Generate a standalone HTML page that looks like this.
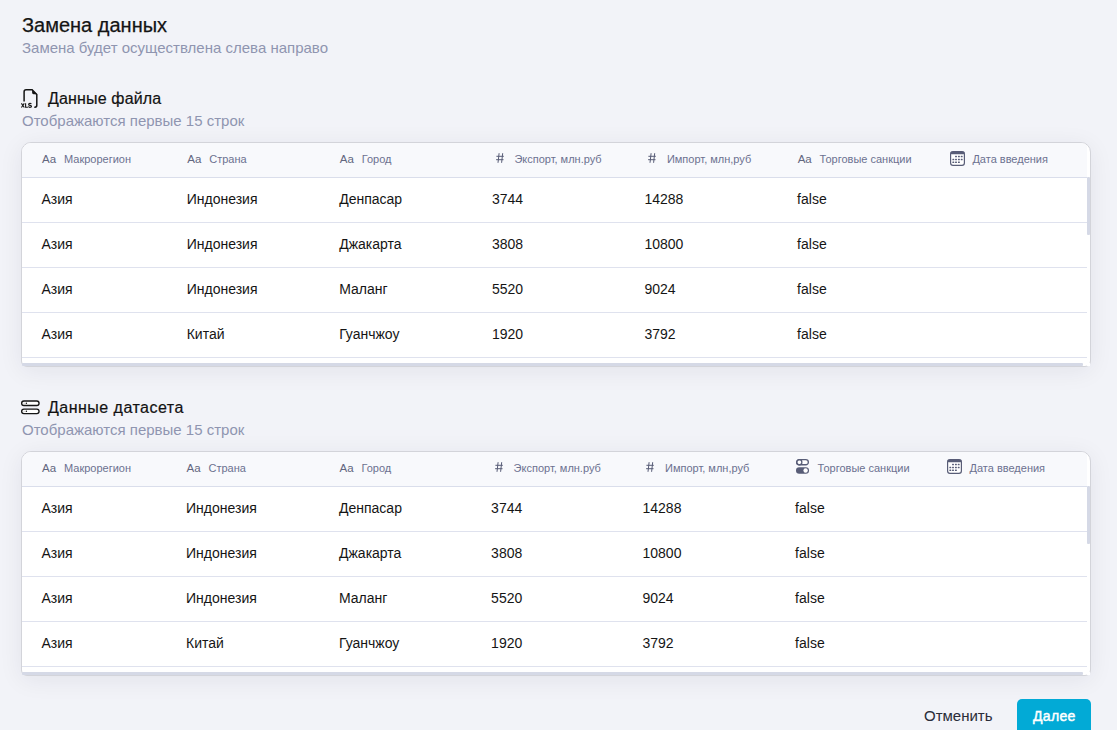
<!DOCTYPE html>
<html><head><meta charset="utf-8">
<style>
*{box-sizing:border-box;margin:0;padding:0}
html,body{width:1117px;height:730px;overflow:hidden;background:#f2f3f8;font-family:"Liberation Sans",sans-serif}
.abs{position:absolute;white-space:nowrap}
.t1{left:22px;top:13px;font-size:20px;line-height:24px;color:#141414;-webkit-text-stroke:0.25px #141414}
.sub{left:22px;font-size:15px;line-height:18px;color:#8f95b0}
.st{left:48px;font-size:16px;line-height:20px;color:#121212;-webkit-text-stroke:0.2px #121212}
.tbl{position:absolute;left:21px;width:1070px;height:225px;border:1px solid #d3d4da;border-radius:10px 10px 6px 6px;background:#fff;box-shadow:0 4px 24px rgba(30,35,60,0.07);overflow:hidden}
.hdr{position:absolute;left:0;top:0;width:1065px;height:35px;background:#f8f9fc;border-bottom:1px solid #dadeeb}
.row{position:absolute;left:0;width:1065px;height:45px;border-bottom:1px solid #dfe2ee}
.c{position:absolute;white-space:nowrap}
.hl{font-size:11px;line-height:14px;color:#6c7190;top:8.5px}
.ic{font-size:11.5px;line-height:14px;color:#62667e;top:9px}
.ich{font-size:13px;line-height:14px;color:#585d77;top:9px;font-weight:700}
.d{font-size:14px;line-height:16px;color:#151515;top:12.5px}
.vsb{position:absolute;left:1065px;top:34px;width:3px;height:58px;background:#d5d9e6;border-radius:1px}
.hsb{left:22px;width:1061px;height:3px;background:#d5d9e6;border-radius:1px}
.corner{left:1087px;width:3px;height:3px;background:#fff}
.btn2{left:924px;top:707px;font-size:15px;line-height:18px;color:#2a2c38;-webkit-text-stroke:0.05px #2a2c38}
.btn{left:1017px;top:699px;width:74px;height:40px;border-radius:5px;background:#02aad6}
.btnt{left:1033px;top:707px;font-size:14px;line-height:18px;color:#fff;font-weight:400;-webkit-text-stroke:0.45px #fff;letter-spacing:0.35px}

</style></head><body>
<div class="abs t1">Замена данных</div>
<div class="abs sub" style="top:39px">Замена будет осуществлена слева направо</div>
<svg class="abs" style="left:18px;top:86px" width="24" height="24" viewBox="0 0 24 24">
<path d="M6.1 15.5 V5.8 Q6.1 3.8 8.1 3.8 H14.1 L18.8 8.5 V19.3 Q18.8 21.2 17 21.2 H16.3" fill="none" stroke="#151515" stroke-width="1.5" stroke-linecap="butt"/>
<path d="M14.1 3.4 V6.8 Q14.1 8.2 15.5 8.2 H19.2 Z" fill="#151515"/>
<g fill="none" stroke="#151515" stroke-width="1.1">
<path d="M3.4 17.4 L6.3 21.5 M6.3 17.4 L3.4 21.5"/>
<path d="M7.6 17.2 V21.2 H9.9"/>
<path d="M13.3 18.1 Q13 17.4 11.9 17.4 Q10.6 17.4 10.6 18.4 Q10.6 19.2 11.9 19.4 Q13.5 19.6 13.5 20.5 Q13.5 21.4 11.9 21.4 Q10.7 21.4 10.3 20.6"/>
</g>
</svg>
<div class="abs st" style="top:89px;letter-spacing:0.16px">Данные файла</div>
<div class="abs sub" style="top:112px">Отображаются первые 15 строк</div>
<div class="tbl" style="top:142px">
<div class="hdr"><div class="c ic" style="left:20.1px">Aa</div><div class="c hl" style="left:42.0px">Макрорегион</div><div class="c ic" style="left:165.3px">Aa</div><div class="c hl" style="left:187.2px">Страна</div><div class="c ic" style="left:317.8px">Aa</div><div class="c hl" style="left:339.7px">Город</div><svg class="c" style="left:473.8px;top:10.3px" width="8" height="10" viewBox="0 0 8 10"><path d="M3.1 0.2 L2.0 9.8 M6.7 0.2 L5.6 9.8 M0.4 3.3 H7.8 M0.1 6.7 H7.5" stroke="#585d77" stroke-width="1.0" fill="none"/></svg><div class="c hl" style="left:492.4px">Экспорт, млн.руб</div><svg class="c" style="left:626.3px;top:10.3px" width="8" height="10" viewBox="0 0 8 10"><path d="M3.1 0.2 L2.0 9.8 M6.7 0.2 L5.6 9.8 M0.4 3.3 H7.8 M0.1 6.7 H7.5" stroke="#585d77" stroke-width="1.0" fill="none"/></svg><div class="c hl" style="left:644.9px">Импорт, млн,руб</div><div class="c ic" style="left:775.7px">Aa</div><div class="c hl" style="left:797.6px">Торговые санкции</div><svg class="c" style="left:927.9px;top:8px" width="15" height="15" viewBox="0 0 15 15"><rect x="0.6" y="0.6" width="13.8" height="13.8" rx="2.4" fill="#fff" stroke="#585d77" stroke-width="1.2"/><rect x="0.65" y="0.65" width="13.7" height="2.6" rx="1" fill="#585d77"/><g fill="#585d77"><rect x="5.05" y="4.70" width="1.9" height="1.6" rx="0.5"/><rect x="7.95" y="4.70" width="1.9" height="1.6" rx="0.5"/><rect x="10.75" y="4.70" width="1.9" height="1.6" rx="0.5"/><rect x="2.35" y="7.70" width="1.9" height="1.6" rx="0.5"/><rect x="5.05" y="7.70" width="1.9" height="1.6" rx="0.5"/><rect x="7.95" y="7.70" width="1.9" height="1.6" rx="0.5"/><rect x="10.75" y="7.70" width="1.9" height="1.6" rx="0.5"/><rect x="2.35" y="10.50" width="1.9" height="1.6" rx="0.5"/><rect x="5.05" y="10.50" width="1.9" height="1.6" rx="0.5"/><rect x="7.95" y="10.50" width="1.9" height="1.6" rx="0.5"/></g></svg><div class="c hl" style="left:950.4px">Дата введения</div></div>
<div class="row" style="top:35px"><div class="c d" style="left:19.5px">Азия</div><div class="c d" style="left:164.7px">Индонезия</div><div class="c d" style="left:317.2px">Денпасар</div><div class="c d" style="left:469.9px">3744</div><div class="c d" style="left:622.4px">14288</div><div class="c d" style="left:775.1px">false</div></div>
<div class="row" style="top:80px"><div class="c d" style="left:19.5px">Азия</div><div class="c d" style="left:164.7px">Индонезия</div><div class="c d" style="left:317.2px">Джакарта</div><div class="c d" style="left:469.9px">3808</div><div class="c d" style="left:622.4px">10800</div><div class="c d" style="left:775.1px">false</div></div>
<div class="row" style="top:125px"><div class="c d" style="left:19.5px">Азия</div><div class="c d" style="left:164.7px">Индонезия</div><div class="c d" style="left:317.2px">Маланг</div><div class="c d" style="left:469.9px">5520</div><div class="c d" style="left:622.4px">9024</div><div class="c d" style="left:775.1px">false</div></div>
<div class="row" style="top:170px"><div class="c d" style="left:19.5px">Азия</div><div class="c d" style="left:164.7px">Китай</div><div class="c d" style="left:317.2px">Гуанчжоу</div><div class="c d" style="left:469.9px">1920</div><div class="c d" style="left:622.4px">3792</div><div class="c d" style="left:775.1px">false</div></div>
<div class="vsb"></div>
</div>
<div class="abs hsb" style="top:363px"></div><div class="abs corner" style="top:363px"></div>

<svg class="abs" style="left:18px;top:396px" width="26" height="22" viewBox="0 0 26 22">
<rect x="3.65" y="5.0" width="17.4" height="4.5" rx="2.25" fill="#fff" stroke="#151515" stroke-width="1.35"/>
<rect x="3.65" y="13.1" width="17.4" height="4.5" rx="2.25" fill="#fff" stroke="#151515" stroke-width="1.35"/>
<circle cx="8.4" cy="7.25" r="0.75" fill="#151515"/><circle cx="8.4" cy="15.35" r="0.75" fill="#151515"/>
<path d="M5.4 7.25 H7.2 M5.4 15.35 H7.2" stroke="#aaa" stroke-width="0.5"/>
</svg>
<div class="abs st" style="top:398px;letter-spacing:0.48px">Данные датасета</div>
<div class="abs sub" style="top:421px">Отображаются первые 15 строк</div>
<div class="tbl" style="top:451px">
<div class="hdr"><div class="c ic" style="left:20.1px">Aa</div><div class="c hl" style="left:42.0px">Макрорегион</div><div class="c ic" style="left:164.6px">Aa</div><div class="c hl" style="left:186.5px">Страна</div><div class="c ic" style="left:317.6px">Aa</div><div class="c hl" style="left:339.5px">Город</div><svg class="c" style="left:473.0px;top:10.3px" width="8" height="10" viewBox="0 0 8 10"><path d="M3.1 0.2 L2.0 9.8 M6.7 0.2 L5.6 9.8 M0.4 3.3 H7.8 M0.1 6.7 H7.5" stroke="#585d77" stroke-width="1.0" fill="none"/></svg><div class="c hl" style="left:491.6px">Экспорт, млн.руб</div><svg class="c" style="left:624.4px;top:10.3px" width="8" height="10" viewBox="0 0 8 10"><path d="M3.1 0.2 L2.0 9.8 M6.7 0.2 L5.6 9.8 M0.4 3.3 H7.8 M0.1 6.7 H7.5" stroke="#585d77" stroke-width="1.0" fill="none"/></svg><div class="c hl" style="left:643.0px">Импорт, млн,руб</div><svg class="c" style="left:773.6px;top:7px" width="14" height="15" viewBox="0 0 14 15"><rect x="0.65" y="0.65" width="11.7" height="5.1" rx="2.55" fill="#fff" stroke="#585d77" stroke-width="1.3"/><circle cx="3.3" cy="3.2" r="2.55" fill="none" stroke="#585d77" stroke-width="1.3"/><rect x="0" y="8.3" width="13" height="6.4" rx="3.2" fill="#585d77"/><circle cx="9.6" cy="11.5" r="2.2" fill="#fff"/></svg><div class="c hl" style="left:795.6px">Торговые санкции</div><svg class="c" style="left:925.0px;top:7px" width="15" height="15" viewBox="0 0 15 15"><rect x="0.6" y="0.6" width="13.8" height="13.8" rx="2.4" fill="#fff" stroke="#585d77" stroke-width="1.2"/><rect x="0.65" y="0.65" width="13.7" height="2.6" rx="1" fill="#585d77"/><g fill="#585d77"><rect x="5.05" y="4.70" width="1.9" height="1.6" rx="0.5"/><rect x="7.95" y="4.70" width="1.9" height="1.6" rx="0.5"/><rect x="10.75" y="4.70" width="1.9" height="1.6" rx="0.5"/><rect x="2.35" y="7.70" width="1.9" height="1.6" rx="0.5"/><rect x="5.05" y="7.70" width="1.9" height="1.6" rx="0.5"/><rect x="7.95" y="7.70" width="1.9" height="1.6" rx="0.5"/><rect x="10.75" y="7.70" width="1.9" height="1.6" rx="0.5"/><rect x="2.35" y="10.50" width="1.9" height="1.6" rx="0.5"/><rect x="5.05" y="10.50" width="1.9" height="1.6" rx="0.5"/><rect x="7.95" y="10.50" width="1.9" height="1.6" rx="0.5"/></g></svg><div class="c hl" style="left:947.5px">Дата введения</div></div>
<div class="row" style="top:35px"><div class="c d" style="left:19.5px">Азия</div><div class="c d" style="left:164.0px">Индонезия</div><div class="c d" style="left:317.0px">Денпасар</div><div class="c d" style="left:469.1px">3744</div><div class="c d" style="left:620.5px">14288</div><div class="c d" style="left:773.1px">false</div></div>
<div class="row" style="top:80px"><div class="c d" style="left:19.5px">Азия</div><div class="c d" style="left:164.0px">Индонезия</div><div class="c d" style="left:317.0px">Джакарта</div><div class="c d" style="left:469.1px">3808</div><div class="c d" style="left:620.5px">10800</div><div class="c d" style="left:773.1px">false</div></div>
<div class="row" style="top:125px"><div class="c d" style="left:19.5px">Азия</div><div class="c d" style="left:164.0px">Индонезия</div><div class="c d" style="left:317.0px">Маланг</div><div class="c d" style="left:469.1px">5520</div><div class="c d" style="left:620.5px">9024</div><div class="c d" style="left:773.1px">false</div></div>
<div class="row" style="top:170px"><div class="c d" style="left:19.5px">Азия</div><div class="c d" style="left:164.0px">Китай</div><div class="c d" style="left:317.0px">Гуанчжоу</div><div class="c d" style="left:469.1px">1920</div><div class="c d" style="left:620.5px">3792</div><div class="c d" style="left:773.1px">false</div></div>
<div class="vsb"></div>
</div>
<div class="abs hsb" style="top:672px"></div><div class="abs corner" style="top:672px"></div>

<div class="abs btn2">Отменить</div>
<div class="abs btn"></div>
<div class="abs btnt">Далее</div>
</body></html>
